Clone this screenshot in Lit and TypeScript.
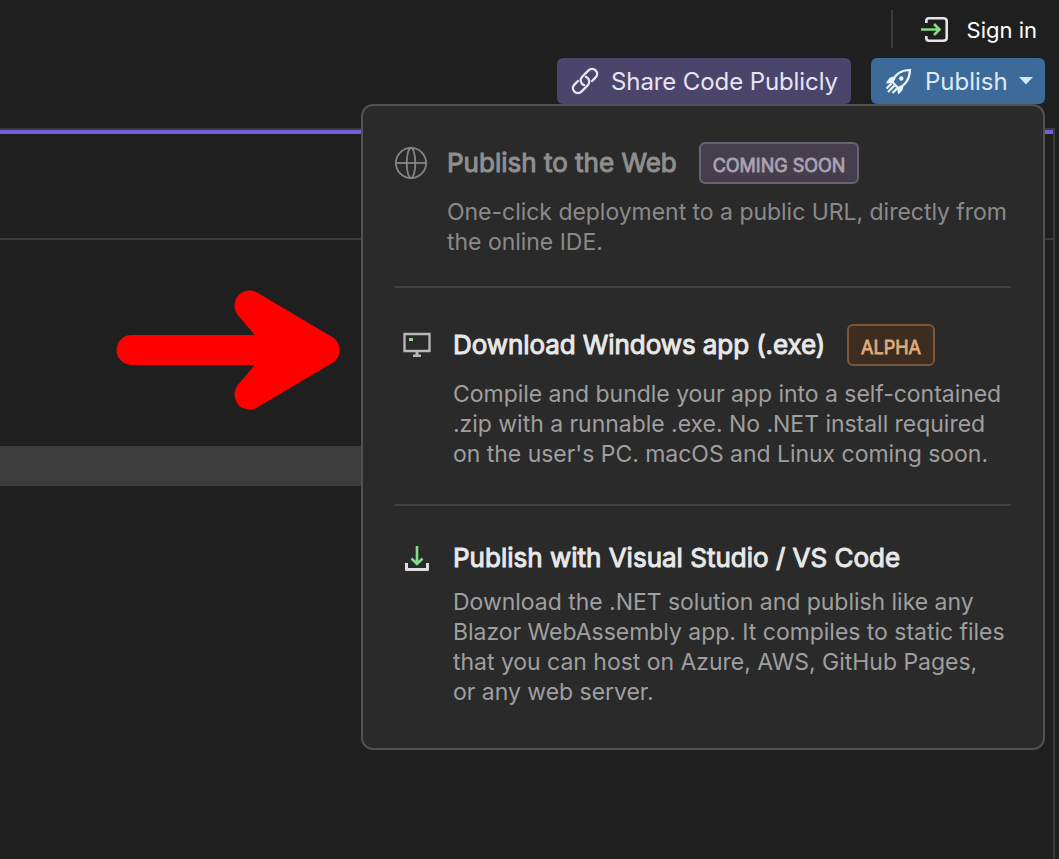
import { LitElement, html, css } from "lit";
import { customElement } from "lit/decorators.js";

@customElement("app-root")
class AppRoot extends LitElement {
  static styles = css`
    * { box-sizing: border-box; }
    :host { display: block; position: relative; width: 1059px; height: 859px; overflow: hidden; background: #1f1f1f; font-family: Inter, sans-serif; color: #e3e3e3; }
    svg { display: block; flex: none; overflow: visible; }
    .top { height: 56px; display: flex; justify-content: flex-end; padding: 10px 22px 0 0; }
    .signin { display: flex; align-items: center; height: 38px; border-left: 2px solid #3b3b3b; padding: 2px 0 0 28px; color: #fff; font-size: 22px; }
    .signin svg { margin-right: 18px; }
    .actions { height: 72px; padding: 2px 14px 0 0; display: flex; justify-content: flex-end; gap: 20px; }
    .btn { height: 46px; border-radius: 6px; display: flex; align-items: center; font-size: 24px; white-space: nowrap; }
    .share { width: 294px; background: #4b456b; padding-left: 14px; gap: 12px; color: #e6e4f2; letter-spacing: -.1px; }
    .publish { width: 174px; background: #3c6b9a; padding-left: 14px; color: #dfe9f3; }
    .publish span { margin: 0 0 0 13px; width: 94px; }
    .work { width: 1055px; height: 731px; border-right: 2px solid #3b3b3b; border-top: 2px solid #3b3b3b; }
    .accent { height: 4px; background: #7460dc; }
    .toolbar { height: 106px; border-bottom: 2px solid #3b3b3b; }
    .body { height: 206px; padding: 49.5px 0 0 116px; }
    .band { height: 40px; width: 1044px; background: #3c3c3c; }
    .menu { position: absolute; left: 361px; top: 104px; width: 684px; height: 646px; border: 2px solid #515151; border-radius: 12px; background: #2a2a2a; padding: 0 32px; }
    .item { display: grid; grid-template-columns: 58px 1fr; }
    .web { height: 182px; grid-template-columns: 52px 1fr; padding-top: 36px; border-bottom: 2px solid #444; }
    .exe { height: 218px; padding-top: 36px; border-bottom: 2px solid #444; }
    .vs { padding-top: 31px; }
    .head { display: flex; align-items: center; height: 42px; }
    .title { font-size: 26px; white-space: nowrap; -webkit-text-stroke: 1px currentColor; color: #e8e8e8; padding-bottom: 2px; }
    .web .title { color: #8f8f8f; width: 230px; }
    .exe .title { letter-spacing: -.08px; width: 371px; }
    .icon { height: 42px; display: flex; align-items: center; }
    .desc { font-size: 23px; line-height: 30px; padding-top: 13px; color: #9f9f9f; white-space: nowrap; letter-spacing: -.03px; }
    .web .desc { color: #8a8a8a; }
    .vs .desc { padding-top: 8px; }
    .tag { height: 42px; border: 2px solid; border-radius: 6px; font-size: 18px; display: flex; align-items: center; justify-content: center; -webkit-text-stroke: .8px currentColor; padding-top: 5px; }
    .soon { width: 160px; margin-left: 22px; background: #453e4c; border-color: #69626f; color: #aaa2b2; }
    .alpha { width: 88px; margin-left: 23px; background: #3d2c20; border-color: #7b5738; color: #dfab7b; }
  `;

  render() {
    return html`
      <div class="top"><div class="signin">
        <svg width="28" height="28" viewBox="0 0 28 28" fill="none" stroke-width="2.6"><path stroke="#e5e5e5" d="M5.3 7V5Q5.3 2.3 8 2.3H22Q25.7 2.3 25.7 5V22Q25.7 24.7 22 24.7H8Q5.3 24.7 5.3 22V20"/><path stroke="#84dc85" stroke-width="2.6" d="M0 13.5H18M13 8L18.5 13.5L13 19"/></svg>
        <span>Sign in</span></div></div>
      <div class="actions">
        <div class="btn share"><svg width="28" height="28" viewBox="0 0 28 28" fill="none" stroke="#e6e4f2" stroke-width="2.4" stroke-linecap="round"><g transform="translate(14 14) rotate(-45)"><path d="M5 5H10A5 5 0 0 0 10 -5H1A5 5 0 0 0 -3.5 2.2"/><path d="M-5 -5H-10A5 5 0 0 0 -10 5H-1A5 5 0 0 0 3.5 -2.2"/></g></svg><span>Share Code Publicly</span></div>
        <div class="btn publish">
          <svg width="27" height="27" viewBox="0 0 27 27" fill="none" stroke="#eef3f8" stroke-width="2.2"><path d="M7.5 14C9.5 7 15 2.3 25 2C24.5 12 20 17.5 13 20Z"/><circle cx="16.3" cy="10.5" r="2.2" fill="#eef3f8" stroke="none"/><path fill="#eef3f8" stroke="none" d="M9 8.5L5 9.5L1.5 14V15.5L7 15ZM18.5 18L17.5 22L14 26H13L12 20Z"/><path d="M6.5 15.5L1.5 20.5M9.5 17.5L3 24M12 20.5L7.5 25"/></svg>
          <span>Publish</span><svg width="14" height="8" viewBox="0 0 14 8"><path fill="#d3e8fb" d="M0 0H14L7 7.5Z"/></svg>
        </div>
      </div>
      <div class="work">
        <div class="accent"></div><div class="toolbar"></div>
        <div class="body"><svg width="224" height="120" viewBox="0 0 224 120" fill="red" stroke="red" stroke-width="30" stroke-linecap="round" stroke-linejoin="round"><path d="M15.5 60H208.5"/><path d="M133.5 15.5L208.5 60L133.5 104.5L171 60Z"/></svg></div>
        <div class="band"></div>
      </div>
      <div class="menu">
        <div class="item web">
          <div class="icon"><svg width="32" height="32" viewBox="0 0 32 32" fill="none" stroke="#858585" stroke-width="1.8"><circle cx="16" cy="16" r="15.1"/><ellipse cx="16" cy="16" rx="4.3" ry="15"/><path d="M1 16H31"/></svg></div>
          <div><div class="head"><span class="title">Publish to the Web</span><span class="tag soon">COMING SOON</span></div>
          <div class="desc"><span>One-click deployment to a public URL, directly from</span><br><span>the online IDE.</span></div></div>
        </div>
        <div class="item exe">
          <div class="icon"><svg width="44" height="28" viewBox="-8 0 44 28"><path fill="none" stroke="#b9b9b9" stroke-width="2.3" d="M1.5 3H26.5V20H1.5Z"/><path fill="#b9b9b9" d="M12.5 21H15.5V23.5H18V26H10V23.5H12.5Z"/><rect x="6" y="7" width="4" height="3" fill="#8bd890"/></svg></div>
          <div><div class="head"><span class="title">Download Windows app (.exe)</span><span class="tag alpha">ALPHA</span></div>
          <div class="desc"><span>Compile and bundle your app into a self-contained</span><br><span>.zip with a runnable .exe. No .NET install required</span><br><span>on the user's PC. macOS and Linux coming soon.</span></div></div>
        </div>
        <div class="item vs">
          <div class="icon"><svg width="44" height="28" viewBox="-9 0 44 28" fill="none"><path stroke="#84dc85" stroke-width="2.6" d="M13 2V20M7.5 14.5L13 20L18.5 14.5"/><path stroke="#dedede" stroke-width="3" stroke-linejoin="round" d="M2.5 19V25.5H23.5V19"/></svg></div>
          <div><div class="head"><span class="title">Publish with Visual Studio / VS Code</span></div>
          <div class="desc"><span>Download the .NET solution and publish like any</span><br><span>Blazor WebAssembly app. It compiles to static files</span><br><span>that you can host on Azure, AWS, GitHub Pages,</span><br><span>or any web server.</span></div></div>
        </div>
      </div>`;
  }
}
